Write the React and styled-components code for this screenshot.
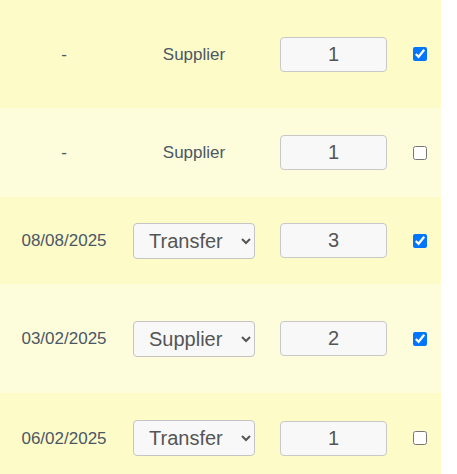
import styled, { createGlobalStyle } from 'styled-components';

const GlobalStyle = createGlobalStyle`
  body {
    margin: 0;
    background: #fff;
    font-family: "Liberation Sans", Arial, sans-serif;
  }
`;

const List = styled.div`
  width: 441px;
`;

const Row = styled.div`
  display: grid;
  grid-template-columns: 128px 132px 147px 34px;
  align-items: center;
  height: ${(p) => p.h}px;
  background: ${(p) => (p.alt ? '#fdfcdb' : '#fdfbc8')};
`;

const DateCell = styled.div`
  text-align: center;
  font-size: 17px;
  color: #4b5766;
  padding-top: 1px;
`;

const SourceText = styled.div`
  text-align: center;
  font-size: 17px;
  color: #4b5766;
  padding-top: 1px;
`;

const SourceSelect = styled.select`
  justify-self: center;
  width: 122px;
  height: 36px;
  padding: 0 6px 0 11px;
  font-family: "Liberation Sans", Arial, sans-serif;
  font-size: 20px;
  color: #555;
  background: #f8f8f8;
  border: 1px solid #c4c4c4;
  border-radius: 4px;
`;

const QtyInput = styled.input`
  justify-self: center;
  box-sizing: border-box;
  width: 107px;
  height: 35px;
  text-align: center;
  font-family: "Liberation Sans", Arial, sans-serif;
  font-size: 20px;
  color: #555;
  background: #f8f8f8;
  border: 1px solid #c8c8c8;
  border-radius: 4px;
`;

const Check = styled.input`
  justify-self: start;
  width: 14px;
  height: 14px;
  margin: 0 0 0 6px;
`;

const rows = [
  { date: '-', source: 'Supplier', fixed: true, qty: 1, checked: true, h: 108 },
  { date: '-', source: 'Supplier', fixed: true, qty: 1, checked: false, h: 89 },
  { date: '08/08/2025', source: 'Transfer', qty: 3, checked: true, h: 87 },
  { date: '03/02/2025', source: 'Supplier', qty: 2, checked: true, h: 109 },
  { date: '06/02/2025', source: 'Transfer', qty: 1, checked: false, h: 90 },
];

export default function App() {
  return (
    <>
      <GlobalStyle />
      <List>
        {rows.map((r, i) => (
          <Row key={i} h={r.h} alt={i % 2 === 1}>
            <DateCell>{r.date}</DateCell>
            {r.fixed ? (
              <SourceText>{r.source}</SourceText>
            ) : (
              <SourceSelect defaultValue={r.source}>
                <option>Supplier</option>
                <option>Transfer</option>
              </SourceSelect>
            )}
            <QtyInput type="text" defaultValue={r.qty} />
            <Check type="checkbox" defaultChecked={r.checked} />
          </Row>
        ))}
      </List>
    </>
  );
}
